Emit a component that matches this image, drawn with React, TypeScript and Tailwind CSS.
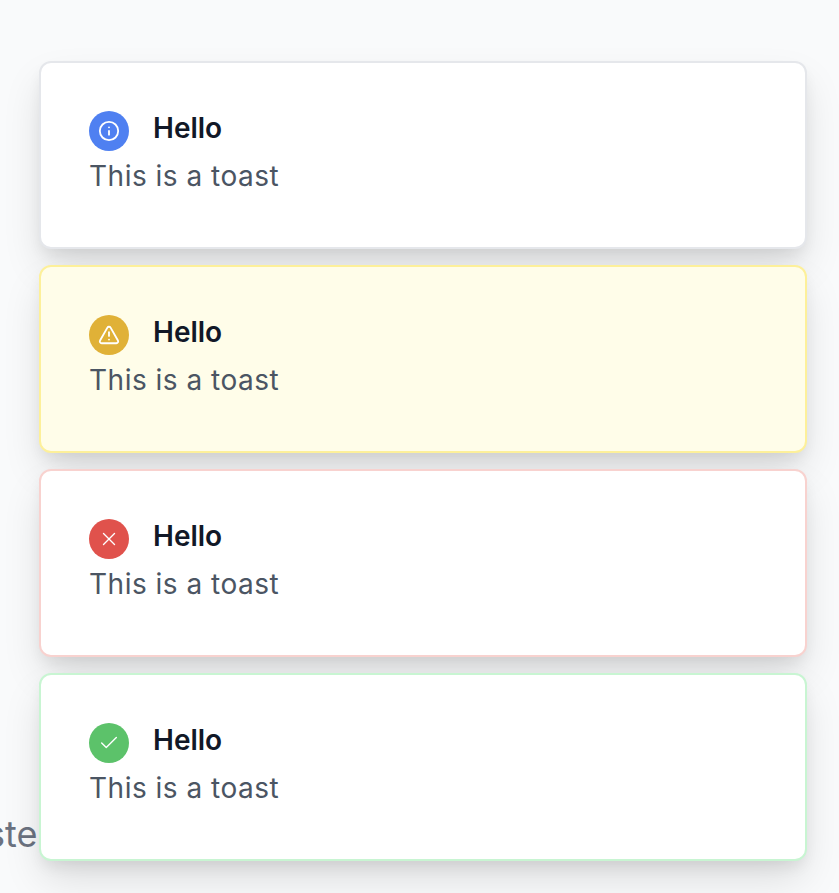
import { Check, Info, TriangleAlert, X } from "lucide-react";

const toasts = [
  { id: "info", Icon: Info, stroke: 2, card: "bg-white border-[#e5e7eb]", badge: "bg-[#4f80f1]" },
  { id: "warning", Icon: TriangleAlert, stroke: 2, card: "bg-[#fffde9] border-[#fdf09a]", badge: "bg-[#e0b137]" },
  { id: "error", Icon: X, stroke: 1.5, card: "bg-white border-[#f8d2cf]", badge: "bg-[#e0524c]" },
  { id: "success", Icon: Check, stroke: 1.5, card: "bg-white border-[#c8f5d2]", badge: "bg-[#5cc26a]" },
];

export default function App() {
  return (
    <div className="relative h-[893px] w-[839px] overflow-hidden bg-[#f9fafb] font-['Inter',sans-serif]">
      {/* text behind the toasts */}
      <span className="absolute left-[-14px] top-[812px] text-[36px] leading-[44px] text-[#6b7280]">ste</span>

      <div className="relative flex flex-col gap-[16px] pl-[39px] pt-[61px]">
        {toasts.map(({ id, Icon, stroke, card, badge }) => (
          <div
            key={id}
            className={`h-[188px] w-[768px] rounded-[12px] border-2 px-[48px] pt-[48px] shadow-[0_20px_40px_-4px_rgba(0,0,0,0.13),0_8px_16px_-4px_rgba(0,0,0,0.09)] ${card}`}
          >
            <div className="flex items-center gap-[24px]">
              <div className={`flex h-[40px] w-[40px] items-center justify-center rounded-full ${badge}`}>
                <Icon size={22} strokeWidth={stroke} className="text-white" />
              </div>
              <span className="relative top-[-3px] text-[28px] font-semibold leading-[36px] text-[#111827]">Hello</span>
            </div>
            <p className="mt-[3px] text-[28px] leading-[44px] tracking-[0.5px] text-[#4b5563]">This is a toast</p>
          </div>
        ))}
      </div>
    </div>
  );
}
